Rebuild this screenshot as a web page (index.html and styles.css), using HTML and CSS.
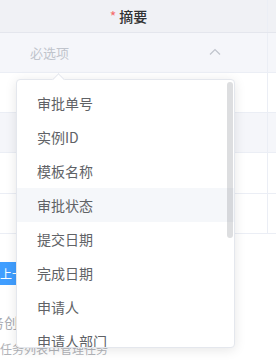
FILE: index.html
```html
<!DOCTYPE html>
<html lang="zh-CN">
<head>
    <meta charset="UTF-8">
    <meta name="viewport" content="width=device-width, initial-scale=1.0">
    <title>摘要字段选择</title>
    <link rel="stylesheet" href="styles.css">
</head>
<body>

    <!-- Table -->
    <div class="table">
        <div class="row head">
            <div class="cell main"><span class="star">*</span> 摘要</div>
            <div class="cell rest"></div>
        </div>
        <div class="row select-row">
            <div class="cell main">
                <div class="select">
                    <span class="placeholder">必选项</span>
                    <svg class="caret" width="12" height="8" viewBox="0 0 12 8">
                        <polyline points="1,6.5 6,1.5 11,6.5" fill="none" stroke="#c0c4cc" stroke-width="1.2"/>
                    </svg>
                </div>
            </div>
            <div class="cell rest"></div>
        </div>
        <div class="row">
            <div class="cell main"></div>
            <div class="cell rest"></div>
        </div>
        <div class="row striped">
            <div class="cell main"></div>
            <div class="cell rest"></div>
        </div>
        <div class="row">
            <div class="cell main"></div>
            <div class="cell rest"></div>
        </div>
        <div class="row">
            <div class="cell main"></div>
            <div class="cell rest"></div>
        </div>
    </div>

    <!-- Footer -->
    <div class="footer">
        <button class="btn-prev">上一步</button>
        <p class="tip">任务创建成功</p>
        <p class="sub-tip">任务列表中管理任务</p>
    </div>

    <!-- Select Dropdown -->
    <div class="dropdown">
        <span class="popper-arrow"></span>
        <ul class="options">
            <li>审批单号</li>
            <li>实例ID</li>
            <li>模板名称</li>
            <li class="hover">审批状态</li>
            <li>提交日期</li>
            <li>完成日期</li>
            <li>申请人</li>
            <li>申请人部门</li>
        </ul>
        <span class="scrollbar"></span>
    </div>

</body>
</html>
```

FILE: styles.css
```css
/* Common Styles */
body {
    font-family: "Noto Sans CJK SC", "Noto Sans", sans-serif;
    margin: 0;
    width: 276px;
    height: 362px;
    overflow: hidden;
    background-color: #fff;
    position: relative;
}

/* Table */
.table {
    width: 276px;
}

.row {
    display: flex;
    height: 39px;
    border-bottom: 1px solid #ebeef5;
}

.row.head {
    height: 32px;
    background-color: #f0f1f5;
    border-bottom: 1px solid #e4e6ed;
}

.row.select-row {
    background-color: #f5f6fa;
}

.row.striped {
    height: 39px;
    background-color: #f5f6fa;
}

.row:nth-child(5) {
    height: 40px;
}

.cell.main {
    width: 268px;
    border-right: 1px solid #ebeef5;
    box-sizing: border-box;
}

.cell.rest {
    flex: 1;
}

.head .cell.main {
    display: flex;
    justify-content: center;
    align-items: center;
    padding-left: 0;
    padding-right: 10px;
    font-size: 14px;
    font-weight: 500;
    color: #303133;
}

.star {
    color: #f56c6c;
    font-weight: normal;
    margin-right: 3px;
}

.select {
    display: flex;
    align-items: center;
    justify-content: space-between;
    height: 39px;
    padding: 0 46px 0 30px;
}

.placeholder {
    font-size: 13px;
    color: #c0c4cc;
}

.caret {
    display: block;
    margin-top: -2px;
}

/* Footer */
.footer {
    padding-top: 28px;
}

.btn-prev {
    display: block;
    margin: 0 0 0 -15px;
    height: 23px;
    padding: 0 15px;
    border: none;
    border-radius: 3px;
    background-color: #409eff;
    color: #fff;
    font-family: inherit;
    font-size: 12px;
    line-height: 23px;
}

.tip {
    margin: 27px 0 0 -24px;
    font-size: 14px;
    line-height: 20px;
    color: #a8abb2;
    white-space: nowrap;
}

.sub-tip {
    margin: 9px 0 0 0;
    font-size: 12px;
    line-height: 16px;
    color: #b1b3b8;
    white-space: nowrap;
}

/* Dropdown */
.dropdown {
    position: absolute;
    left: 16px;
    top: 79px;
    width: 219px;
    height: 269px;
    box-sizing: border-box;
    background-color: #fff;
    border: 1px solid #e4e7ed;
    border-radius: 4px;
    box-shadow: 0 2px 12px 0 rgba(0, 0, 0, 0.1);
}

.popper-arrow {
    position: absolute;
    top: -5px;
    left: 37px;
    width: 8px;
    height: 8px;
    background-color: #fff;
    border-top: 1px solid #e4e7ed;
    border-left: 1px solid #e4e7ed;
    transform: rotate(45deg);
}

.options {
    list-style: none;
    margin: 0;
    padding: 6px 0;
    height: 100%;
    box-sizing: border-box;
    overflow: hidden;
    border-radius: 4px;
}

.options li {
    height: 34px;
    line-height: 34px;
    padding: 0 20px;
    font-size: 14px;
    color: #606266;
}

.options li.hover {
    background-color: #f5f7fa;
}

.scrollbar {
    position: absolute;
    top: 2px;
    right: 1px;
    width: 6px;
    height: 156px;
    border-radius: 3px;
    background-color: rgba(144, 147, 153, 0.3);
}
```
